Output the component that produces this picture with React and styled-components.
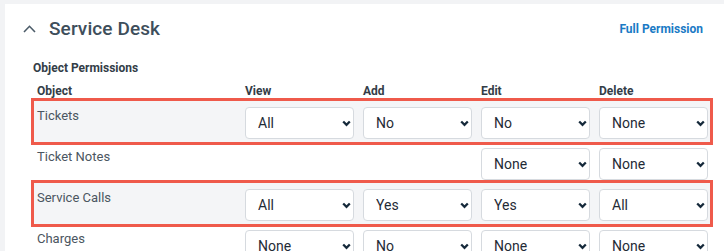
import styled, { createGlobalStyle } from "styled-components"

const GlobalStyle = createGlobalStyle`
    html, body {
        margin: 0;
        padding: 0;
        background: #f2f3f5;
        font-family: Roboto, "Liberation Sans", Arial, sans-serif;
    }
`

const Page = styled.div`
    padding: 4px 0 0 5px;
    height: 251px;
    box-sizing: border-box;
    overflow: hidden;
`

const Card = styled.section`
    background: #ffffff;
    height: 100%;
    padding: 13px 21px 0 18px;
    box-sizing: border-box;
`

const Header = styled.div`
    display: flex;
    align-items: center;
    justify-content: space-between;
    height: 24px;
`

const TitleWrap = styled.div`
    display: flex;
    align-items: center;
    gap: 13px;
`

const Title = styled.h2`
    margin: 0;
    font-size: 19px;
    line-height: 24px;
    font-weight: 500;
    color: #3e4e5b;
    letter-spacing: 0.1px;
`

const FullLink = styled.a`
    font-size: 12px;
    line-height: 16px;
    font-weight: 700;
    color: #1a7ac5;
    text-decoration: none;
    cursor: pointer;
`

const Content = styled.div`
    padding: 19px 0 0 11px;
`

const SectionLabel = styled.div`
    font-size: 12px;
    line-height: 16px;
    font-weight: 700;
    color: #333d47;
    margin-left: -1px;
`

const Grid = styled.div`
    display: grid;
    grid-template-columns: 199px repeat(4, 109px);
    column-gap: 9px;
    padding: 0 2px 0 3px;
    width: 676px;
    box-sizing: border-box;
`

const HeadRow = styled(Grid)`
    margin-top: 7px;
    margin-bottom: 2px;
    font-size: 12px;
    line-height: 16px;
    font-weight: 700;
    color: #333d47;
`

const Row = styled(Grid)`
    height: 41px;
    padding-top: 6px;
    align-items: start;
    background: ${(p) => (p.$marked ? "#f4f5f7" : "transparent")};
    outline: ${(p) => (p.$marked ? "3px solid #ef5a4b" : "none")};
`

const Label = styled.div`
    font-size: 13px;
    line-height: 16px;
    padding-top: 1px;
    color: #4b5661;
`

const SelectWrap = styled.div`
    position: relative;
    height: 32px;
`

const Select = styled.select`
    appearance: none;
    width: 100%;
    height: 32px;
    box-sizing: border-box;
    border: 1px solid #d6dadf;
    border-radius: 4px;
    background: #ffffff;
    padding: 0 20px 0 12px;
    font-family: inherit;
    font-size: 14px;
    color: #1f2b36;
    outline: none;
`

const Caret = styled.svg`
    position: absolute;
    right: 3px;
    top: 13px;
    pointer-events: none;
`

const Chevron = () => (
    <svg width="13" height="8" viewBox="0 0 13 8">
        <path d="M1 7 L6.5 1.3 L12 7" fill="none" stroke="#4b5b68" strokeWidth="1.6" />
    </svg>
)

const Dropdown = ({ value, options }) => (
    <SelectWrap>
        <Select defaultValue={value}>
            {options.map((o) => (
                <option key={o}>{o}</option>
            ))}
        </Select>
        <Caret width="9" height="7" viewBox="0 0 9 7">
            <path d="M1.2 1.5 L4.5 4.8 L7.8 1.5" fill="none" stroke="#15293a" strokeWidth="2.3" />
        </Caret>
    </SelectWrap>
)

const levels = ["None", "All"]
const yesNo = ["No", "Yes"]

const rows = [
    { name: "Tickets", marked: true, cells: [["All", levels], ["No", yesNo], ["No", yesNo], ["None", levels]] },
    { name: "Ticket Notes", cells: [null, null, ["None", levels], ["None", levels]] },
    { name: "Service Calls", marked: true, cells: [["All", levels], ["Yes", yesNo], ["Yes", yesNo], ["All", levels]] },
    { name: "Charges", cells: [["None", levels], ["No", yesNo], ["None", levels], ["None", levels]] },
]

const App = () => {
    return (
        <Page>
            <GlobalStyle />
            <Card>
                <Header>
                    <TitleWrap>
                        <Chevron />
                        <Title>Service Desk</Title>
                    </TitleWrap>
                    <FullLink>Full Permission</FullLink>
                </Header>
                <Content>
                    <SectionLabel>Object Permissions</SectionLabel>
                    <HeadRow>
                        <span>Object</span>
                        <span>View</span>
                        <span>Add</span>
                        <span>Edit</span>
                        <span>Delete</span>
                    </HeadRow>
                    {rows.map((r) => (
                        <Row key={r.name} $marked={r.marked}>
                            <Label>{r.name}</Label>
                            {r.cells.map((c, i) =>
                                c ? <Dropdown key={i} value={c[0]} options={c[1]} /> : <div key={i} />
                            )}
                        </Row>
                    ))}
                </Content>
            </Card>
        </Page>
    )
}

export default App
